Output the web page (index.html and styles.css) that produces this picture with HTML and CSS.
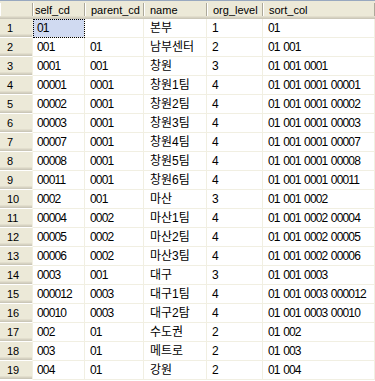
FILE: index.html
```html
<!DOCTYPE html>
<html>
<head>
<meta charset="utf-8">
<link rel="stylesheet" href="styles.css">
</head>
<body>
<table class="grid">
  <colgroup>
    <col class="c-row"><col class="c-self"><col class="c-parent"><col class="c-name"><col class="c-level"><col class="c-sort">
  </colgroup>
  <thead>
    <tr><th class="corner"></th><th class="first">self_cd</th><th>parent_cd</th><th>name</th><th>org_level</th><th>sort_col</th></tr>
  </thead>
  <tbody>
    <tr><td class="rh">1</td><td class="first sel">01</td><td></td><td class="nm">본부</td><td>1</td><td>01</td></tr>
    <tr><td class="rh">2</td><td class="first">001</td><td>01</td><td class="nm">남부센터</td><td>2</td><td>01 001</td></tr>
    <tr><td class="rh">3</td><td class="first">0001</td><td>001</td><td class="nm">창원</td><td>3</td><td>01 001 0001</td></tr>
    <tr><td class="rh">4</td><td class="first">00001</td><td>0001</td><td class="nm">창원1팀</td><td>4</td><td>01 001 0001 00001</td></tr>
    <tr><td class="rh">5</td><td class="first">00002</td><td>0001</td><td class="nm">창원2팀</td><td>4</td><td>01 001 0001 00002</td></tr>
    <tr><td class="rh">6</td><td class="first">00003</td><td>0001</td><td class="nm">창원3팀</td><td>4</td><td>01 001 0001 00003</td></tr>
    <tr><td class="rh">7</td><td class="first">00007</td><td>0001</td><td class="nm">창원4팀</td><td>4</td><td>01 001 0001 00007</td></tr>
    <tr><td class="rh">8</td><td class="first">00008</td><td>0001</td><td class="nm">창원5팀</td><td>4</td><td>01 001 0001 00008</td></tr>
    <tr><td class="rh">9</td><td class="first">00011</td><td>0001</td><td class="nm">창원6팀</td><td>4</td><td>01 001 0001 00011</td></tr>
    <tr><td class="rh">10</td><td class="first">0002</td><td>001</td><td class="nm">마산</td><td>3</td><td>01 001 0002</td></tr>
    <tr><td class="rh">11</td><td class="first">00004</td><td>0002</td><td class="nm">마산1팀</td><td>4</td><td>01 001 0002 00004</td></tr>
    <tr><td class="rh">12</td><td class="first">00005</td><td>0002</td><td class="nm">마산2팀</td><td>4</td><td>01 001 0002 00005</td></tr>
    <tr><td class="rh">13</td><td class="first">00006</td><td>0002</td><td class="nm">마산3팀</td><td>4</td><td>01 001 0002 00006</td></tr>
    <tr><td class="rh">14</td><td class="first">0003</td><td>001</td><td class="nm">대구</td><td>3</td><td>01 001 0003</td></tr>
    <tr><td class="rh">15</td><td class="first">000012</td><td>0003</td><td class="nm">대구1팀</td><td>4</td><td>01 001 0003 000012</td></tr>
    <tr><td class="rh">16</td><td class="first">00010</td><td>0003</td><td class="nm">대구2탐</td><td>4</td><td>01 001 0003 00010</td></tr>
    <tr><td class="rh">17</td><td class="first">002</td><td>01</td><td class="nm">수도권</td><td>2</td><td>01 002</td></tr>
    <tr><td class="rh">18</td><td class="first">003</td><td>01</td><td class="nm">메트로</td><td>2</td><td>01 003</td></tr>
    <tr><td class="rh">19</td><td class="first">004</td><td>01</td><td class="nm">강원</td><td>2</td><td>01 004</td></tr>
  </tbody>
</table>
</body>
</html>
```
FILE: styles.css
```css
html, body {
  margin: 0;
  padding: 0;
  background: #ffffff;
}

.grid {
  table-layout: fixed;
  border-collapse: separate;
  border-spacing: 0;
  width: 375px;
}

.c-row { width: 33px; }
.c-self { width: 52px; }
.c-parent { width: 59px; }
.c-name { width: 63px; }
.c-level { width: 56px; }
.c-sort { width: 112px; }

.grid th {
  height: 18px;
  padding: 0 0 0 6px;
  border-top: 1px solid #98a8bf;
  background-color: #ece9d8;
  background-image: linear-gradient(#aca899, #aca899), linear-gradient(#ffffff, #ffffff);
  background-repeat: no-repeat;
  background-size: 1px 13px, 1px 13px;
  background-position: right 0 top 2px, left 0 top 2px;
  box-shadow: inset 0 -1px #cbc7b8, inset 0 -2px #d6d2c2, inset 0 -3px #e2decd;
  font-family: "Liberation Sans", Arial, sans-serif;
  font-size: 11px;
  font-weight: normal;
  color: #000;
  text-align: left;
  line-height: 18px;
  vertical-align: top;
  white-space: nowrap;
  overflow: hidden;
}

.grid th.first { padding-left: 2px; }
.grid th.corner { padding: 0; }

.grid td {
  height: 17px;
  padding: 1px 0 0 5px;
  border-right: 1px solid #f1efe2;
  border-bottom: 1px solid #f1efe2;
  font-family: "Liberation Sans", "Noto Sans CJK KR", sans-serif;
  font-size: 12px;
  letter-spacing: -0.85px;
  word-spacing: 1px;
  line-height: 17px;
  color: #000;
  white-space: nowrap;
  overflow: hidden;
  vertical-align: top;
}

.grid td.first { padding-left: 4px; }

.grid td.nm {
  padding-left: 6px;
  letter-spacing: 0;
  word-spacing: 0;
}

.grid td.rh {
  padding-left: 7px;
  letter-spacing: 0;
  word-spacing: 0;
  background: #ece9d8;
  border-right: 1px solid #f1efe2;
  border-bottom: 1px solid #ffffff;
  box-shadow: inset 0 -1px #cbc7b8, inset 0 -2px #d6d2c2, inset 0 -3px #e2decd;
  font-family: "Liberation Sans", Arial, sans-serif;
  font-size: 11px;
}

.grid td.sel {
  background: #d0daf1;
  outline: 1px dotted #000;
  outline-offset: -1px;
}
```
